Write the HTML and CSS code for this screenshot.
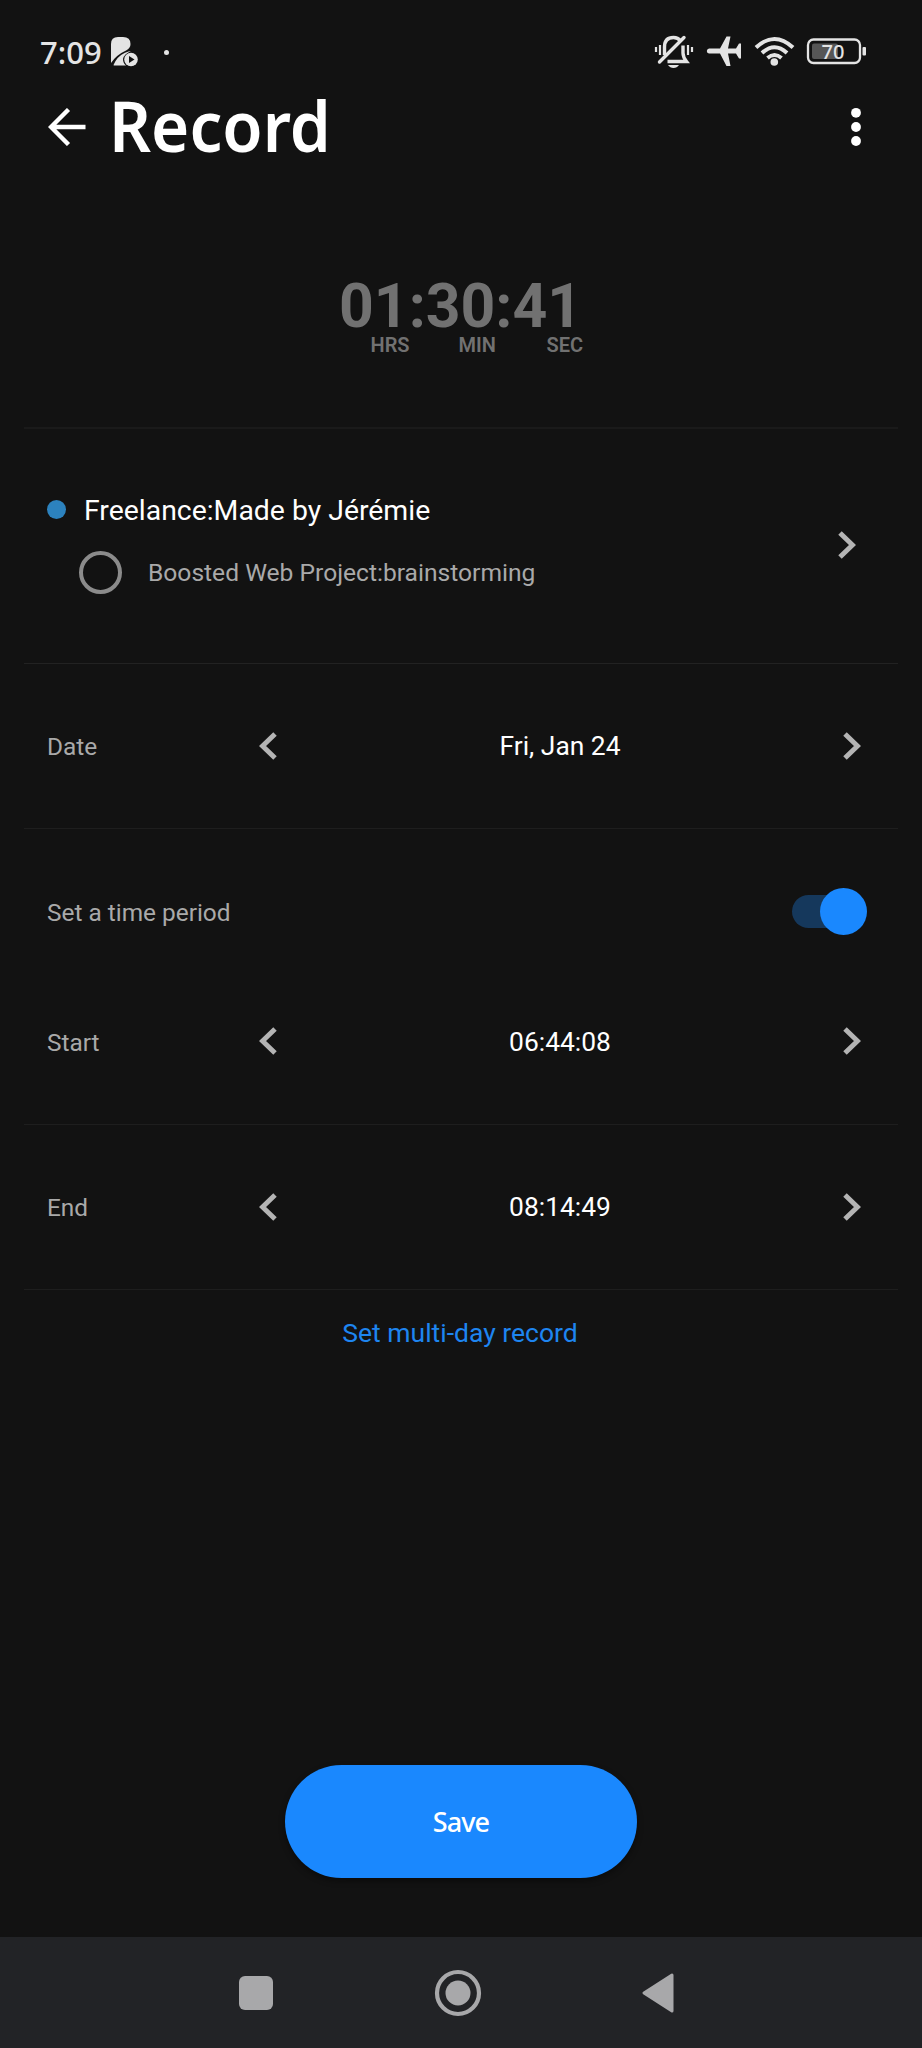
FILE: index.html
```html
<!DOCTYPE html>
<html lang="en">
<head>
<meta charset="utf-8">
<title>Record</title>
<link rel="stylesheet" href="styles.css">
</head>
<body>
<div class="screen">
  <header class="status">
    <span class="clock">7:09</span>
    <svg class="app-icon" width="28" height="30" viewBox="0 0 28 30">
      <path d="M0 26V7Q0 0 7 0H12Q19.500 0 19.500 7Q19.500 11 15.500 13.200Q5 18 0 26Z" fill="#e4e4e4"/>
      <path d="M2.500 28Q6 19.500 14 15.800Q18 14 20 14Q13 17 12 22Q12 26 15 28.500H4Q2.500 28.500 2.500 28Z" fill="#e4e4e4"/>
      <circle cx="20" cy="22.500" r="6.800" fill="#e4e4e4"/>
      <path d="M18 19V26L23.500 22.500Z" fill="#121212"/>
    </svg>
    <span class="notif-dot"></span>
    <svg class="status-icons" width="214" height="36" viewBox="654 34 214 36" fill="none" stroke="#e4e4e4">
      <path d="M656 47V52M660 45V55M688 45V55M692 47V52" stroke-width="2.200"/>
      <path d="M664.500 55V47Q664.500 37.500 673.500 37.500Q678 37.500 680.500 41M683 45.500V53Q683 57 686.500 61.500H667.500" stroke-width="3.400"/>
      <path d="M659.500 62L684 37.500" stroke-width="3.400" stroke-linecap="round"/>
      <path d="M668 65H679Q677 68 673.500 68Q670 68 668 65Z" fill="#e4e4e4" stroke="none"/>
      <path d="M709 48.500H720L726.500 36.500H730.500L728 48.500H736L739 43.500H741V58.500H739L736 53.500H728L730.500 66H726.500L720 53.500H709Q706.800 53 706.800 51Q706.800 49 709 48.500Z" fill="#e4e4e4" stroke="none"/>
      <path d="M756 47.500Q774.500 30.500 793 47.500M762 53Q774.500 41.500 787 53M767.500 58Q774.500 52 781.500 58" stroke-width="4"/>
      <circle cx="774.300" cy="62" r="3.800" fill="#e4e4e4" stroke="none"/>
      <rect x="808" y="39.500" width="52" height="23.500" rx="5.500" stroke-width="2.300"/>
      <rect x="812" y="43.500" width="26" height="15.500" rx="2" fill="#565656" stroke="none"/>
      <rect x="862.500" y="47" width="3.500" height="8.500" rx="1" fill="#e4e4e4" stroke="none"/>
      <text class="battery-text" x="833" y="58.500" text-anchor="middle">70</text>
    </svg>
  </header>

  <div class="appbar">
    <svg class="back" width="38" height="38" viewBox="0 0 38 38" fill="none" stroke="#fff" stroke-width="4.400"><path d="M37.500 19H3M20.500 1.500L3 19L20.500 36.500"/></svg>
    <h1 class="title">Record</h1>
    <svg class="more" width="10" height="40" viewBox="0 0 10 40" fill="#fff"><circle cx="5" cy="5.800" r="4.900"/><circle cx="5" cy="20" r="4.900"/><circle cx="5" cy="34" r="4.900"/></svg>
  </div>

  <section class="timer">
    <div class="digits">01:30:41</div>
    <div class="units"><span>HRS</span><span>MIN</span><span>SEC</span></div>
  </section>

  <section class="project">
    <div class="project-info">
      <div class="project-name"><span class="dot"></span><span>Freelance:Made by Jérémie</span></div>
      <div class="task"><span class="radio"></span><span>Boosted Web Project:brainstorming</span></div>
    </div>
    <svg class="chev" width="18" height="28" viewBox="0 0 18 28"><path d="M2 2L14.500 14L2 26"/></svg>
  </section>

  <section class="row date">
    <span class="label">Date</span>
    <svg class="chev" width="18" height="28" viewBox="0 0 18 28"><path d="M16 2L3.500 14L16 26"/></svg>
    <span class="value">Fri, Jan 24</span>
    <svg class="chev" width="18" height="28" viewBox="0 0 18 28"><path d="M2 2L14.500 14L2 26"/></svg>
  </section>

  <section class="period">
    <span>Set a time period</span>
    <span class="toggle"><span class="thumb"></span></span>
  </section>

  <section class="row start">
    <span class="label">Start</span>
    <svg class="chev" width="18" height="28" viewBox="0 0 18 28"><path d="M16 2L3.500 14L16 26"/></svg>
    <span class="value">06:44:08</span>
    <svg class="chev" width="18" height="28" viewBox="0 0 18 28"><path d="M2 2L14.500 14L2 26"/></svg>
  </section>

  <section class="row end">
    <span class="label">End</span>
    <svg class="chev" width="18" height="28" viewBox="0 0 18 28"><path d="M16 2L3.500 14L16 26"/></svg>
    <span class="value">08:14:49</span>
    <svg class="chev" width="18" height="28" viewBox="0 0 18 28"><path d="M2 2L14.500 14L2 26"/></svg>
  </section>

  <a class="multi">Set multi-day record</a>
  <button class="save">Save</button>

  <nav class="navbar">
    <span class="recent"></span>
    <svg class="home" width="48" height="48" viewBox="0 0 48 48"><circle cx="24" cy="24" r="21" fill="none" stroke="#a8a8aa" stroke-width="4.200"/><circle cx="24" cy="24" r="12.500" fill="#a8a8aa"/></svg>
    <svg class="nav-back" width="32" height="40" viewBox="0 0 32 40"><path d="M2 20L30 2V38Z" fill="#a8a8aa" stroke="#a8a8aa" stroke-width="3" stroke-linejoin="round"/></svg>
  </nav>
</div>
</body>
</html>
```
FILE: styles.css
```css
* { box-sizing: border-box; }
body { margin: 0; background: #121212; }
.screen {
  width: 922px;
  height: 2048px;
  display: flex;
  flex-direction: column;
  background: #121212;
  color: #fff;
  font-family: Roboto, sans-serif;
  overflow: hidden;
}
.status {
  height: 84px;
  padding: 20px 54px 0 40px;
  display: flex;
  align-items: center;
  flex: none;
}
.clock { font: 500 31px/40px "Noto Sans", sans-serif; color: #e4e4e4; width: 71px; }
.notif-dot { width: 5px; height: 5px; border-radius: 50%; background: #e4e4e4; margin-left: 25px; }
.status-icons { margin-left: auto; }
.battery-text { font: 500 20px "Noto Sans", sans-serif; fill: #e4e4e4; stroke: none; }
.appbar { height: 85px; padding: 0 61px 0 48px; display: flex; align-items: center; flex: none; }
.title { margin: 0 0 3px 23px; font: 600 71px/82px "Noto Sans", sans-serif; transform: scaleX(.922); transform-origin: left; }
.more { margin-left: auto; }
.timer { height: 260px; padding-top: 112px; margin: 0 24px; border-bottom: 2px solid #1a1a1a; color: #717171; flex: none; }
.digits { font-size: 60.7px; font-weight: 700; line-height: 52px; margin-left: 315px; }
.units { display: flex; font-size: 20px; font-weight: 600; line-height: 24px; margin-left: 346.5px; }
.units span { width: 88px; }
.project { height: 235px; margin: 0 24px; padding: 63px 42px 0 23px; border-bottom: 1px solid #222; display: flex; flex: none; }
.project-name { display: flex; align-items: center; height: 37px; font-size: 28.4px; }
.dot { width: 19px; height: 19px; border-radius: 50%; background: #2c82be; margin: 0 18px 2px 0; }
.task { display: flex; align-items: center; margin: 22px 0 0 32px; height: 43px; font-size: 24.6px; color: #a9a9a9; }
.radio { width: 43px; height: 43px; border: 4px solid #8b8b8b; border-radius: 50%; margin-right: 26px; }
.chev { fill: none; stroke: #b4b4b4; stroke-width: 5; flex: none; }
.project .chev { margin: 39px 0 0 auto; }
.row { margin: 0 24px; padding: 0 37px 0 23px; display: flex; align-items: center; border-bottom: 1px solid #1e1e1e; flex: none; }
.row .chev { margin-bottom: 1px; }
.label { width: 212px; font-size: 24.4px; color: #a9a9a9; padding-top: 1px; }
.value { flex: 1; text-align: center; font-size: 26.4px; }
.date { height: 165px; }
.period { height: 166px; padding: 0 55px 0 47px; display: flex; align-items: center; justify-content: space-between; font-size: 24.4px; color: #a9a9a9; flex: none; }
.toggle { width: 70px; height: 33px; border-radius: 17px; background: #15385c; margin: 0 5px 2px 0; display: flex; align-items: center; }
.thumb { width: 47px; height: 47px; border-radius: 50%; background: #1a88fe; flex: none; margin-left: 28px; }
.start { height: 130px; padding-bottom: 36px; }
.end { height: 165px; }
.multi { height: 88px; text-align: center; font-size: 26.5px; line-height: 86px; color: #1e85f0; padding-right: 2px; flex: none; }
.save { margin: 387px auto 0 285px; width: 352px; height: 113px; padding: 0; border: 0; border-radius: 57px; background: #1a88fe; color: #fff; font: 500 27px/40px "Noto Sans", sans-serif; letter-spacing: -0.9px; flex: none; box-shadow: 0 3px 6px rgba(0, 0, 0, .4); }
.navbar { margin-top: auto; height: 111px; background: #222326; padding-left: 239px; display: flex; align-items: center; flex: none; }
.recent { width: 34px; height: 34px; border-radius: 6px; background: #a8a8aa; }
.home { margin-left: 161px; }
.nav-back { margin-left: 160px; }
```
